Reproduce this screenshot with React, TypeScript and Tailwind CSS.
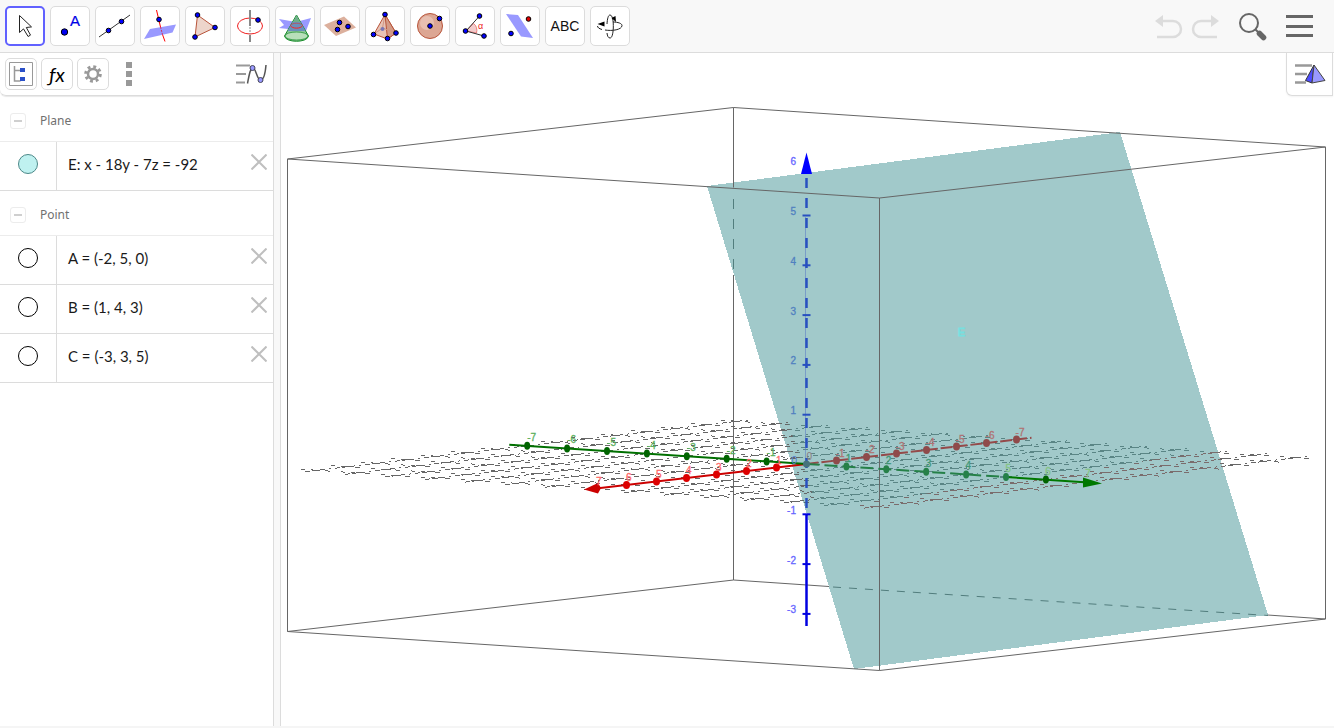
import type { ReactNode, SVGProps } from 'react';

type Point = [number, number];

const ORIGIN: Point = [806.5, 464];

// Parallel projection of a space point to the canvas
function project(x: number, y: number, z = 0): Point {
  return [ORIGIN[0] - 30 * x + 39.9 * y, ORIGIN[1] + 3.5 * x + 2.6 * y - 49.8 * z];
}

const RANGE = [-7, -6, -5, -4, -3, -2, -1, 0, 1, 2, 3, 4, 5, 6, 7];

function Dot({ x, y, r = 2.3, fill = '#0000ff' }: { x: number; y: number; r?: number; fill?: string }) {
  return <circle cx={x} cy={y} r={r} fill={fill} stroke="#000" strokeWidth="1" />;
}

const tools: { name: string; icon: ReactNode }[] = [
  {
    name: 'Move',
    icon: (
      <path d="M10.5 6.5v17l4-3.6 4.6 7.6 2.4-1.4-4.2-7.6 5.2-.6z" fill="#fff" stroke="#222" strokeWidth="1" strokeLinejoin="round" />
    ),
  },
  {
    name: 'Point',
    icon: (
      <>
        <Dot x={10.5} y={23} r={3.2} fill="#0000f0" />
        <text x="16" y="17" fontSize="15" fill="#0000e6" stroke="#0000e6" strokeWidth=".2" className="font-['Liberation_Sans']">A</text>
      </>
    ),
  },
  {
    name: 'Line',
    icon: (
      <>
        <path d="M0 28 31 6" stroke="#333" />
        <Dot x={9.5} y={21.5} />
        <Dot x={22.5} y={12.5} />
      </>
    ),
  },
  {
    name: 'Perpendicular Line',
    icon: (
      <>
        <path d="M6 20 32 15.5 28.5 23.5 0 30z" fill="#9999ff" />
        <path d="M12.5 1l4 17M18.5 25.5l2.5 7" stroke="#ff0000" />
        <path d="M16.5 18l2 7.5" stroke="#cc3366" strokeDasharray="2 1" />
        <Dot x={15} y={10.5} />
      </>
    ),
  },
  {
    name: 'Polygon',
    icon: (
      <>
        <path d="M8.5 6 26 18.5 6 28z" fill="#edd5cb" stroke="#b8543a" />
        <Dot x={8.5} y={6} />
        <Dot x={26} y={18.5} />
        <Dot x={6} y={28} />
      </>
    ),
  },
  {
    name: 'Circle with Axis',
    icon: (
      <>
        <ellipse cx="16" cy="17" rx="12.5" ry="8" fill="none" stroke="#f02020" />
        <path d="M16 1v16M16 26v7" stroke="#888" strokeWidth="2" />
        <path d="M16 18v7" stroke="#888" strokeDasharray="2 1" />
        <Dot x={24} y={11} />
      </>
    ),
  },
  {
    name: 'Intersect Two Surfaces',
    icon: (
      <>
        <path d="M0 10l17 3 15-4-5 13-27-3 5-3z" fill="#9999ff" />
        <path d="M17.5 6 5.5 27c1 7 23 7 24 0z" fill="#8fc79a" stroke="#168b28" />
        <path d="M13.500 13 8.500 22h18L21.500 13z" fill="#6a8fbb" />
        <path d="M17.5 6 14 13h7z" fill="#6fae8c" />
        <ellipse cx="17.5" cy="27" rx="11.5" ry="4" fill="#b8dfba" stroke="#168b28" strokeWidth=".7" />
        <path d="M11.5 16.5c1 3.500 11 3.500 12 0" fill="none" stroke="#ff2020" />
        <path d="M11.5 16.5c1-3 11-3 12 0" fill="none" stroke="#cc4040" strokeWidth=".7" />
      </>
    ),
  },
  {
    name: 'Plane through 3 Points',
    icon: (
      <>
        <path d="M0 16 20 7.5 32 18.5 12 27z" fill="#dcb09d" />
        <Dot x={15.5} y={13.5} />
        <Dot x={24} y={17.5} />
        <Dot x={13.5} y={20.5} />
      </>
    ),
  },
  {
    name: 'Pyramid',
    icon: (
      <>
        <path d="M16 5.5 5 25l13.500 5 8.500-6z" fill="#e8c3b6" stroke="#b8543a" />
        <path d="M16 5.5 18.500 30 27 24z" fill="#d39a86" stroke="#b8543a" />
        <path d="M16 5.5 13.500 19 5 25M13.500 19 27 24" fill="none" stroke="#cf9583" />
        <circle cx="13.5" cy="20" r="2" fill="#7a78b5" />
        <Dot x={16} y={5.5} />
        <Dot x={4.5} y={25.5} />
        <Dot x={18.5} y={29.5} />
        <Dot x={27} y={24} />
      </>
    ),
  },
  {
    name: 'Sphere',
    icon: (
      <>
        <circle cx="16" cy="17" r="12.5" fill="#dca693" stroke="#b8543a" />
        <circle cx="13" cy="14" r="7" fill="#efd0c5" fillOpacity=".6" />
        <Dot x={16} y={17} />
        <Dot x={25.5} y={9.5} />
      </>
    ),
  },
  {
    name: 'Angle',
    icon: (
      <>
        <path d="M7 22l7.500-7.500c3 2 4 6 3 9.500z" fill="#f3cccc" stroke="#ee8080" />
        <path d="M20.5 7 7 22l18 5" fill="none" stroke="#333" />
        <text x="19" y="20" fontSize="9" fill="#ee2020" className="font-['Liberation_Sans']">α</text>
        <Dot x={20.5} y={7} />
        <Dot x={6.5} y={22} />
        <Dot x={25} y={27} />
      </>
    ),
  },
  {
    name: 'Reflect about Plane',
    icon: (
      <>
        <path d="M2 5l12 1 15 23-12-1.500z" fill="#9999ff" />
        <Dot x={7} y={24.5} />
        <Dot x={24.5} y={10} fill="#e00000" />
      </>
    ),
  },
  {
    name: 'Text',
    icon: (
      <text x="16" y="22" fontSize="14" textAnchor="middle" fill="#111" className="font-['Liberation_Sans']">ABC</text>
    ),
  },
  {
    name: 'Rotate 3D Graphics View',
    icon: (
      <>
        <path d="M13 15c.3-5 1.200-9 3-9 2.500 0 3.500 6 3.300 13-.3 6-1.300 10-3.300 10-1.700 0-2.700-2-3-5" fill="none" stroke="#222" />
        <path d="M8 20.500c-3-.8-4.500-2-4.500-3.500M11 21c7 1.200 17-.2 17-4.500 0-2-4-3.500-9-3.500" fill="none" stroke="#222" />
        <path d="M3.500 15l7-2.500v5zM17.500 9l4-2 .5 6z" fill="#000" />
      </>
    ),
  },
];

function Toolbar() {
  return (
    <header className="flex h-[53px] items-center justify-between border-b border-[#dcdcdc] bg-[#f8f8f8] px-[5px]">
      <div className="flex gap-[5px]">
        {tools.map((tool, i) => (
          <button
            key={tool.name}
            aria-label={tool.name}
            className={
              i === 0
                ? 'flex size-10 items-center justify-center rounded-[5px] border-2 border-[#6161ff] bg-white'
                : 'flex size-10 items-center justify-center rounded-[5px] border border-[#dcdcdc] bg-white'
            }
          >
            <svg width="32" height="34" viewBox="0 0 32 34" className="shrink-0" fill="none">
              {tool.icon}
            </svg>
          </button>
        ))}
      </div>
      <div className="flex items-center pr-[15px]">
        <button aria-label="Undo" className="mr-[5px]">
          <svg width="30" height="28" fill="none" stroke="#dcdcdc" strokeWidth="2.5">
            <path d="M6 9h12c4.500 0 8 3.500 8 8s-3.500 8-8 8H2" />
            <path d="M0 9l8-6v12z" fill="#dcdcdc" stroke="none" />
          </svg>
        </button>
        <button aria-label="Redo" className="mr-[18px]">
          <svg width="30" height="28" fill="none" stroke="#dcdcdc" strokeWidth="2.500">
            <path d="M22 9H11c-4.500 0-8 3.500-8 8s3.500 8 8 8h16" />
            <path d="M29 9l-8-6v12z" fill="#dcdcdc" stroke="none" />
          </svg>
        </button>
        <button aria-label="Search" className="mr-[18px]">
          <svg width="30" height="30" fill="none" stroke="#666">
            <circle cx="11" cy="12" r="9" strokeWidth="2" />
            <path d="M17 18l4 4" strokeWidth="2" />
            <path d="M21.500 22.500l4 4" strokeWidth="5.500" strokeLinecap="round" />
          </svg>
        </button>
        <button aria-label="Menu">
          <svg width="28" height="26" stroke="#666" strokeWidth="3">
            <path d="M0 3.500h27M0 13.500h27M0 22.500h27" />
          </svg>
        </button>
      </div>
    </header>
  );
}

function StyleBar() {
  const box = 'flex size-8 items-center justify-center rounded-[5px] border border-[#dcdcdc] bg-white';
  return (
    <div className="mb-px flex h-[43px] items-center rounded-bl-md border-b border-[#dcdcdc] pr-1 pl-[5px] shadow-[0_1px_1px_#e8e8e8]">
      <div className="flex flex-1 gap-1">
        <button aria-label="Sort objects" className={box}>
          <svg width="24" height="24" fill="none">
            <path d="M.500.500h23v23H.500z" stroke="#999" />
            <path d="M5.500 4v15h6M5.500 8.500h6" stroke="#999" strokeWidth="1.500" />
            <path d="M11 6h5v4h-5zM11 15h5v4h-5z" fill="#2a50c8" />
          </svg>
        </button>
        <button aria-label="Auxiliary objects" className={box}>
          <span className="font-['Lato',sans-serif] text-[20px] leading-6 text-black italic">ƒx</span>
        </button>
        <button aria-label="Settings" className={box}>
          <svg width="18" height="18" viewBox="0 0 18 18" fill="none" stroke="#999">
            <circle cx="9" cy="9" r="5" strokeWidth="2.500" />
            <circle cx="9" cy="9" r="7.300" strokeWidth="3" strokeDasharray="2.870 2.870" />
          </svg>
        </button>
        <button aria-label="More" className="flex size-8 items-center justify-center">
          <svg width="6" height="24" fill="#999">
            <path d="M0 0h6v6H0zM0 9h6v6H0zM0 18h6v6H0z" />
          </svg>
        </button>
      </div>
      <button aria-label="Toggle style bar">
        <svg width="34" height="24" fill="none">
          <path d="M1 3.500h14M1 12h10M1 20.500h9" stroke="#999" strokeWidth="2" />
          <path d="M12.500 21.500C14 14 15 6 18 6s4 12 7.500 12 5-9 5.500-15" stroke="#555" strokeWidth="1.500" />
          <circle cx="17.500" cy="6" r="2.500" fill="#9999ff" stroke="#445" />
          <circle cx="25.500" cy="18" r="2.500" fill="#9999ff" stroke="#445" />
        </svg>
      </button>
    </div>
  );
}

function GroupHeader({ title }: { title: string }) {
  return (
    <div className="flex h-[45px] items-center border-b border-[#ececec] pt-1">
      <button
        aria-label={`Collapse ${title}`}
        className="ml-[10px] flex size-4 items-center justify-center rounded-[3px] border border-[#ececec]"
      >
        <span className="h-0.5 w-2 bg-[#cfcfcf]" />
      </button>
      <h2 className="ml-[14px] font-['Noto_Sans','Open_Sans',sans-serif] text-xs text-[#707070]">{title}</h2>
    </div>
  );
}

function ObjectRow({ text, filled }: { text: string; filled?: boolean }) {
  return (
    <li className="flex h-[49px] border-b border-[#dcdcdc]">
      <div className="flex w-[57px] items-center justify-center border-r border-[#dcdcdc] pb-1">
        <button
          aria-label={`Show or hide ${text}`}
          className={
            filled
              ? 'size-5 rounded-full border border-[#4c8888] bg-[#bff1f0]'
              : 'size-5 rounded-full border border-black bg-white'
          }
        />
      </div>
      <div className="flex flex-1 items-center pb-1 pl-[11px] font-['Lato','Open_Sans',sans-serif] text-[15px] text-[#1a1a1a]">
        {text}
      </div>
      <button aria-label={`Delete ${text}`} className="mr-1.5 self-start pt-3">
        <svg width="16" height="16" stroke="#bfbfbf" strokeWidth="2">
          <path d="M.5.5l15 15M15.5.5l-15 15" />
        </svg>
      </button>
    </li>
  );
}

function AlgebraPanel() {
  return (
    <aside className="w-[274px] shrink-0 border-r border-[#dcdcdc] bg-white">
      <StyleBar />
      <GroupHeader title="Plane" />
      <ul>
        <ObjectRow text="E: x - 18y - 7z = -92" filled />
      </ul>
      <GroupHeader title="Point" />
      <ul>
        <ObjectRow text="A = (-2, 5, 0)" />
        <ObjectRow text="B = (1, 4, 3)" />
        <ObjectRow text="C = (-3, 3, 5)" />
      </ul>
    </aside>
  );
}

function Line({ from, to, ...rest }: { from: Point; to: Point } & SVGProps<SVGLineElement>) {
  return <line x1={from[0]} y1={from[1]} x2={to[0]} y2={to[1]} {...rest} />;
}

function Grid() {
  return (
    <g shapeRendering="crispEdges">
      {RANGE.map((n) => (
        <Line key={`x${n}`} from={project(7.4, n)} to={project(-7.4, n)} strokeDasharray="5 2 13 4 2 4" />
      ))}
      {RANGE.map((n) => (
        <Line key={`y${n}`} from={project(n, -7.4)} to={project(n, 7.4)} strokeDasharray="4 6 4 10 5 11" />
      ))}
    </g>
  );
}

function Graphics3D() {
  return (
    <svg
      viewBox="281 53 1053 673"
      preserveAspectRatio="xMinYMin slice"
      className="block h-full w-full"
      fill="none"
      role="img"
      aria-label="3D Graphics"
    >
      <defs>
        <clipPath id="behind">
          <path d="M707 186 1120 132l98 318-400 60z" />
        </clipPath>
        <clipPath id="front">
          <path d="M818 510l400-60 50 165-414 54z" />
        </clipPath>
      </defs>

      <path d="M707 186 1120 132l148 483-414 54z" fill="#a1c9ca" shapeRendering="crispEdges" />

      {/* xy grid, tinted where the plane covers it */}
      <g stroke="#666">
        <Grid />
      </g>
      <g stroke="#5a8585" clipPath="url(#behind)">
        <Grid />
      </g>
      <g stroke="#7a6c6c" clipPath="url(#front)">
        <Grid />
      </g>

      {/* bounding box */}
      <g stroke="#666" strokeWidth="1">
        <path d="M287.5 159 733.5 107.5 1325.5 147 879.5 198zM287.5 159v472.500M1325.5 147v472M879.5 198v472.500" />
        <path d="M733.5 107.5v80M733.5 275v305M829 586.5l-95.500-6.500-446 51.500 592 39 446-51.500-58-4" />
        <path d="M733.5 199v76" stroke="#527d7d" strokeDasharray="10 10" />
        <path d="M833 587l435 28.500" stroke="#527d7d" strokeDasharray="8 8" />
      </g>

      {/* x axis */}
      <Line from={project(0, 0)} to={[596, 488.5]} stroke="#cc0000" strokeWidth="2" />
      <Line from={project(0, 0)} to={project(-7.5, 0)} stroke="#944a4a" strokeWidth="2" strokeDasharray="12 3" />
      {RANGE.filter((n) => n < 7 && n !== 0).map((n) => {
        const [x, y] = project(n, 0);
        return <ellipse key={n} cx={x} cy={y} rx="3.5" ry="4" fill={n > 0 ? '#dd0000' : '#8f4a4a'} />;
      })}
      <path d="M584 489.5l14-6.500 3 5-3 5.500z" fill="#cc0000" />

      {/* y axis */}
      <Line from={project(0, -7.45)} to={project(0, 0)} stroke="#007000" strokeWidth="2" />
      <Line from={project(0, 0)} to={project(0, 5)} stroke="#258048" strokeWidth="2" strokeDasharray="13 5" />
      <Line from={project(0, 5)} to={[1088, 482.5]} stroke="#007800" strokeWidth="2" />
      {RANGE.filter((n) => n < 7 && n !== 0).map((n) => {
        const [x, y] = project(0, n);
        return <ellipse key={n} cx={x} cy={y} rx="3" ry="4" fill={n > 0 && n < 6 ? '#258048' : '#006400'} />;
      })}
      <path d="M1102 483.5l-19-6v10z" fill="#007800" />

      {/* z axis */}
      <path d="M805.5 217v245" stroke="#5f7fc4" strokeWidth=".6" />
      <path d="M806.5 178v336" stroke="#2850c0" strokeWidth="2.500" strokeDasharray="10 10" />
      <path d="M806.5 514v112" stroke="#0000e0" strokeWidth="2.500" />
      <path d="M806.5 152.5l5.500 21.500h-11z" fill="#0000ff" />
      {[5, 4, 3, 2, 1, -1, -2, -3].map((n) => {
        const [x, y] = project(0, 0, n);
        return <Line key={n} from={[x - 4, y + 0.5]} to={[x + 4, y + 0.5]} stroke={n > -1 ? '#2850c0' : '#0000e0'} strokeWidth="2" />;
      })}
      <circle cx="806.5" cy="464" r="3.5" fill="#46737b" />

      {/* axis numbers */}
      <g className="font-['Liberation_Sans',sans-serif]" fontSize="10" strokeWidth=".3" textAnchor="end">
        {[6, 5, 4, 3, 2, 1, -1, -2, -3].map((n) => {
          const color = n > 0 && n < 6 ? '#5080c0' : '#6666ff';
          return (
            <text key={n} x="796" y={n === 6 ? 165 : 464 - 49.8 * n} fill={color} stroke={color}>
              {n}
            </text>
          );
        })}
        <text x="797" y="464" fill="#5080d0">0</text>
        <text x="812" y="460" fill="#8a7a80">0</text>
        {RANGE.filter((n) => n !== 0).map((n) => {
          const [x, y] = project(n, 0);
          const color = n > 0 ? '#ff6666' : '#b07373';
          return (
            <text key={n} x={x + (n < 0 ? 8 : 5)} y={y - 4} fill={color} stroke={color}>
              {n}
            </text>
          );
        })}
        {RANGE.filter((n) => n !== 0).map((n) => {
          const [x, y] = project(0, n);
          const color = n < 0 ? '#5cb05c' : n > 4 ? '#84c484' : '#3f9673';
          return (
            <text key={n} x={x + (n < 0 ? 9 : 5)} y={y - 5} fill={color} stroke={color}>
              {n}
            </text>
          );
        })}
        <text x="965" y="336" fontSize="11" strokeWidth="1" fill="#77dfdf" stroke="#77dfdf">E</text>
      </g>
    </svg>
  );
}

export default function App() {
  return (
    <div className="flex h-screen min-h-0 flex-col overflow-hidden bg-white">
      <Toolbar />
      <main className="flex min-h-0 flex-1 border-b-2 border-[#f5f5f5]">
        <AlgebraPanel />
        <div className="w-[7px] shrink-0 border-r border-[#dcdcdc] bg-[#f8f8f8]" />
        <section className="relative min-w-0 flex-1 overflow-hidden">
          <Graphics3D />
          <button
            aria-label="3D view style bar"
            className="absolute top-0 right-px flex h-[43px] w-[47px] items-center justify-center rounded-bl-md border border-t-0 border-[#dcdcdc] bg-white shadow-xs"
          >
            <svg width="32" height="24" fill="none">
              <path d="M1 3.500h17M1 12h12M1 20.500h11" stroke="#999" strokeWidth="2.500" />
              <path d="M20 3 11.500 18.500l6.500 2.500z" fill="#4d4dff" stroke="#333" />
              <path d="M20 3l-2 18 13-2.500z" fill="#9999ff" stroke="#444" />
            </svg>
          </button>
        </section>
      </main>
    </div>
  );
}
